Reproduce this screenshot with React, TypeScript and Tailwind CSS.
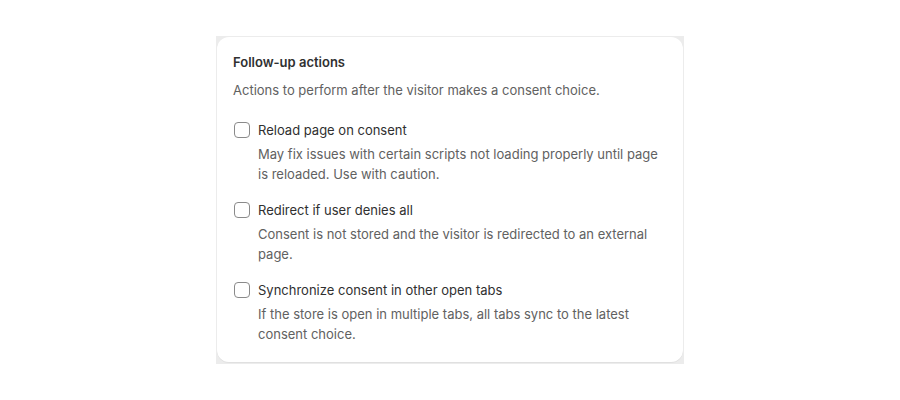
import React from "react";

type Option = {
  id: string;
  label: string;
  help: string;
};

const options: Option[] = [
  {
    id: "reload",
    label: "Reload page on consent",
    help: "May fix issues with certain scripts not loading properly until page is reloaded. Use with caution.",
  },
  {
    id: "redirect",
    label: "Redirect if user denies all",
    help: "Consent is not stored and the visitor is redirected to an external page.",
  },
  {
    id: "sync",
    label: "Synchronize consent in other open tabs",
    help: "If the store is open in multiple tabs, all tabs sync to the latest consent choice.",
  },
];

const App: React.FC = () => {
  return (
    <div
      className="w-[900px] h-[400px] bg-white flex justify-center pt-[36px]"
      style={{ fontFamily: "Inter, 'Noto Sans', sans-serif" }}
    >
      <div className="w-[468px] h-[328px] bg-[#ececec] p-px">
        <div className="h-full bg-white rounded-xl shadow-[inset_0_-1px_0_0_rgba(0,0,0,0.12)] px-4 pt-[15px] pb-4 text-[13px] leading-5 text-[#303030]">
          <h2 className="font-semibold">Follow-up actions</h2>
          <p className="mt-2 text-[#616161]">
            Actions to perform after the visitor makes a consent choice.
          </p>

          <div className="mt-5 flex flex-col gap-4">
            {options.map((opt) => (
              <div key={opt.id}>
                <label htmlFor={opt.id} className="flex items-center gap-2 cursor-pointer">
                  <input
                    id={opt.id}
                    type="checkbox"
                    className="appearance-none m-0 ml-px w-4 h-4 rounded-[4px] border border-[#8a8a8a] bg-white shrink-0"
                  />
                  <span>{opt.label}</span>
                </label>
                <p className="mt-1 pl-[25px] pr-1 text-[#616161]">{opt.help}</p>
              </div>
            ))}
          </div>
        </div>
      </div>
    </div>
  );
};

export default App;
